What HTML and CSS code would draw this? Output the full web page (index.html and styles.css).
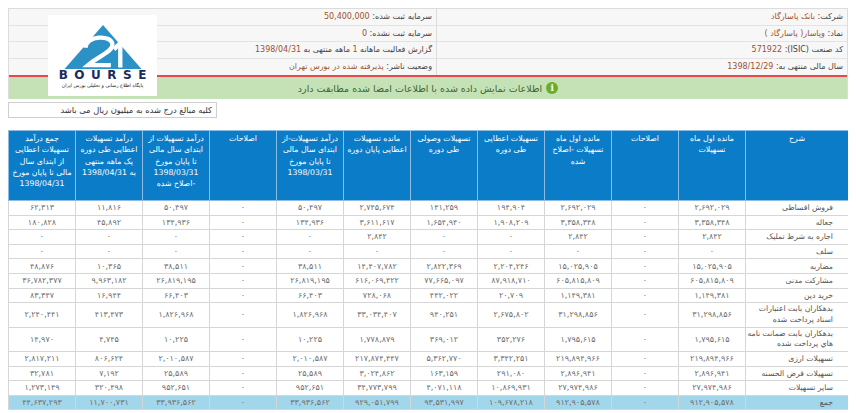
FILE: index.html
```html
<!DOCTYPE html>
<html lang="fa">
<head>
<meta charset="utf-8">
<title>گزارش فعالیت ماهانه - بانک پاسارگاد</title>
<link rel="stylesheet" href="styles.css">
</head>
<body>
<div class="report-head">
  <div class="info">
    <div class="info-col info-right">
      <div class="info-row">شرکت: <span class="val">بانک پاسارگاد</span></div>
      <div class="info-row">نماد: <span class="val">وپاسار( پاسارگاد )</span></div>
      <div class="info-row">کد صنعت (ISIC): <span class="val">571922</span></div>
      <div class="info-row">سال مالی منتهی به: <span class="val">1398/12/29</span></div>
    </div>
    <div class="info-col info-left">
      <div class="info-row">سرمایه ثبت شده: <span class="val">50,400,000</span></div>
      <div class="info-row">سرمایه ثبت نشده: <span class="val">0</span></div>
      <div class="info-row">گزارش فعالیت ماهانه <span class="val">1</span> ماهه منتهی به <span class="val">1398/04/31</span></div>
      <div class="info-row">وضعیت ناشر: <span class="val">پذیرفته شده در بورس تهران</span></div>
    </div>
  </div>
  <div class="verified">
    <span class="info-icon">i</span>
    <span>اطلاعات نمایش داده شده با اطلاعات امضا شده مطابقت دارد</span>
  </div>
  <div class="logo">
    <svg class="logo-mark" viewBox="0 0 100 56" width="84" height="44">
      <polygon points="50,0 1,56 99,56" fill="#2c92c6"/>
      <path d="M28,29 C28,13 62,12 62,25 C62,34 44,40 31,51 L60,51" fill="none" stroke="#fff" stroke-width="5.5"/>
      <path d="M64,31 L72,23 L72,54" fill="none" stroke="#fff" stroke-width="5.5"/>
    </svg>
    <div class="logo-word">BOURSE</div>
    <div class="logo-sub">پایگاه اطلاع رسانی و تحلیلی بورس ایران</div>
  </div>
</div>

<div class="note">کلیه مبالغ درج شده به میلیون ریال می باشد</div>

<table class="grid">
  <colgroup>
    <col class="c-label"><col><col><col><col><col><col><col><col><col><col><col>
  </colgroup>
  <thead>
    <tr>
      <th>شرح</th>
      <th>مانده اول ماه<br>تسهیلات</th>
      <th>اصلاحات</th>
      <th>مانده اول ماه<br>تسهیلات -اصلاح<br>شده</th>
      <th>تسهیلات اعطایی<br>طی دوره</th>
      <th>تسهیلات وصولی<br>طی دوره</th>
      <th>مانده تسهیلات<br>اعطایی پایان دوره</th>
      <th>درآمد تسهیلات-از<br>ابتدای سال مالی<br>تا پایان مورخ<br>1398/03/31</th>
      <th>اصلاحات</th>
      <th>درآمد تسهیلات از<br>ابتدای سال مالی<br>تا پایان مورخ<br>1398/03/31<br>-اصلاح شده</th>
      <th>درآمد تسهیلات<br>اعطایی طی دوره<br>یک ماهه منتهی<br>به 1398/04/31</th>
      <th>جمع درآمد<br>تسهیلات اعطایی<br>از ابتدای سال<br>مالی تا پایان مورخ<br>1398/04/31</th>
    </tr>
  </thead>
  <tbody>
    <tr><td class="lbl">فروش اقساطی</td><td>۲,۶۹۲,۰۲۹</td><td>۰</td><td>۲,۶۹۲,۰۲۹</td><td>۱۹۴,۹۰۴</td><td>۱۴۱,۲۵۹</td><td>۲,۷۴۵,۶۷۴</td><td>۵۰,۴۹۷</td><td>۰</td><td>۵۰,۴۹۷</td><td>۱۱,۸۱۶</td><td>۶۲,۳۱۳</td></tr>
    <tr><td class="lbl">جعاله</td><td>۳,۳۵۸,۳۴۸</td><td>۰</td><td>۳,۳۵۸,۳۴۸</td><td>۱,۹۰۸,۲۰۹</td><td>۱,۶۵۴,۹۴۰</td><td>۳,۶۱۱,۶۱۷</td><td>۱۳۴,۹۳۶</td><td>۰</td><td>۱۳۴,۹۳۶</td><td>۴۵,۸۹۲</td><td>۱۸۰,۸۲۸</td></tr>
    <tr><td class="lbl">اجاره به شرط تملیک</td><td>۲,۸۴۲</td><td>۰</td><td>۲,۸۴۲</td><td>۰</td><td>۰</td><td>۲,۸۴۲</td><td>۰</td><td>۰</td><td>۰</td><td>۰</td><td>۰</td></tr>
    <tr><td class="lbl">سلف</td><td>۰</td><td>۰</td><td>۰</td><td>۰</td><td>۰</td><td>۰</td><td>۰</td><td>۰</td><td>۰</td><td>۰</td><td>۰</td></tr>
    <tr><td class="lbl">مضاربه</td><td>۱۵,۰۲۵,۹۰۵</td><td>۰</td><td>۱۵,۰۲۵,۹۰۵</td><td>۲,۲۰۴,۲۴۶</td><td>۲,۸۲۲,۳۶۹</td><td>۱۴,۴۰۷,۷۸۲</td><td>۳۸,۵۱۱</td><td>۰</td><td>۳۸,۵۱۱</td><td>۱۰,۳۶۵</td><td>۴۸,۸۷۶</td></tr>
    <tr><td class="lbl">مشارکت مدنی</td><td>۶۰۵,۸۱۵,۸۰۹</td><td>۰</td><td>۶۰۵,۸۱۵,۸۰۹</td><td>۸۷,۹۱۸,۷۱۰</td><td>۷۷,۶۶۵,۰۹۷</td><td>۶۱۶,۰۶۹,۴۲۲</td><td>۲۶,۸۱۹,۱۹۵</td><td>۰</td><td>۲۶,۸۱۹,۱۹۵</td><td>۹,۹۶۳,۱۸۲</td><td>۳۶,۷۸۲,۳۷۷</td></tr>
    <tr><td class="lbl">خرید دین</td><td>۱,۱۴۹,۳۸۱</td><td>۰</td><td>۱,۱۴۹,۳۸۱</td><td>۲۰,۷۰۹</td><td>۴۴۲,۰۲۲</td><td>۷۲۸,۰۶۸</td><td>۶۶,۴۰۳</td><td>۰</td><td>۶۶,۴۰۳</td><td>۱۶,۹۴۴</td><td>۸۳,۳۴۷</td></tr>
    <tr class="tall"><td class="lbl">بدهکاران بابت اعتبارات<br>اسناد پرداخت شده</td><td>۳۱,۲۹۸,۸۵۶</td><td>۰</td><td>۳۱,۲۹۸,۸۵۶</td><td>۲,۶۷۵,۸۰۲</td><td>۹۴۰,۲۵۱</td><td>۳۳,۰۳۴,۴۰۷</td><td>۱,۸۲۶,۹۶۸</td><td>۰</td><td>۱,۸۲۶,۹۶۸</td><td>۴۱۳,۴۷۳</td><td>۲,۲۴۰,۴۴۱</td></tr>
    <tr class="tall"><td class="lbl">بدهکاران بابت ضمانت نامه<br>هاي پرداخت شده</td><td>۱,۷۹۵,۶۱۵</td><td>۰</td><td>۱,۷۹۵,۶۱۵</td><td>۳۵۲,۲۷۶</td><td>۳۶۹,۰۱۲</td><td>۱,۷۷۸,۸۷۹</td><td>۱۰,۲۲۵</td><td>۰</td><td>۱۰,۲۲۵</td><td>۴,۷۴۵</td><td>۱۴,۹۷۰</td></tr>
    <tr><td class="lbl">تسهیلات ارزی</td><td>۲۱۹,۸۹۴,۹۶۶</td><td>۰</td><td>۲۱۹,۸۹۴,۹۶۶</td><td>۳,۳۴۲,۲۵۱</td><td>۵,۳۶۲,۷۷۰</td><td>۲۱۷,۸۷۴,۴۴۷</td><td>۲,۰۱۰,۵۸۷</td><td>۰</td><td>۲,۰۱۰,۵۸۷</td><td>۸۰۶,۶۲۴</td><td>۲,۸۱۷,۲۱۱</td></tr>
    <tr><td class="lbl">تسهیلات قرض الحسنه</td><td>۲,۸۹۶,۹۴۱</td><td>۰</td><td>۲,۸۹۶,۹۴۱</td><td>۲۹۱,۰۸۰</td><td>۱۶۳,۱۵۹</td><td>۳,۰۲۴,۸۶۲</td><td>۲۵,۵۸۹</td><td>۰</td><td>۲۵,۵۸۹</td><td>۷,۱۹۲</td><td>۳۲,۷۸۱</td></tr>
    <tr><td class="lbl">سایر تسهیلات</td><td>۲۷,۹۷۴,۹۸۶</td><td>۰</td><td>۲۷,۹۷۴,۹۸۶</td><td>۱۰,۸۶۹,۹۳۱</td><td>۴,۰۷۱,۱۱۸</td><td>۳۴,۷۷۳,۷۹۹</td><td>۹۵۲,۶۵۱</td><td>۰</td><td>۹۵۲,۶۵۱</td><td>۳۲۰,۴۹۸</td><td>۱,۲۷۳,۱۴۹</td></tr>
    <tr class="total"><td class="lbl">جمع</td><td>۹۱۲,۹۰۵,۵۷۸</td><td>۰</td><td>۹۱۲,۹۰۵,۵۷۸</td><td>۱۰۹,۶۷۸,۲۱۸</td><td>۹۳,۵۳۱,۹۹۷</td><td>۹۲۹,۰۵۱,۷۹۹</td><td>۳۳,۹۳۶,۵۶۲</td><td>۰</td><td>۳۳,۹۳۶,۵۶۲</td><td>۱۱,۷۰۰,۷۳۱</td><td>۴۴,۶۳۷,۲۹۳</td></tr>
  </tbody>
</table>
</body>
</html>
```

FILE: styles.css
```css
* { box-sizing: border-box; }

body {
  margin: 8px;
  background: #fff;
  color: #333;
  font-family: "DejaVu Sans", sans-serif;
}

.report-head {
  position: relative;
  border: 1px solid #dcdcdc;
  border-bottom: 0;
}

.info {
  display: flex;
  direction: rtl;
}

.info-col {
  display: flex;
  flex-direction: column;
}

.info-right {
  width: 411px;
  border-left: 1px solid #dcdcdc;
}

.info-left {
  flex: 1;
}

.info-row {
  height: 16.5px;
  line-height: 16px;
  padding: 0 4px;
  background: #f7f7f7;
  border-bottom: 1px solid #e3e3e3;
  font-size: 8px;
  color: #444;
  white-space: nowrap;
}

.info-row:last-child {
  border-bottom: 0;
}

.val {
  color: #a0522d;
}

.verified {
  height: 24px;
  border-top: 2px solid #e8474b;
  background: #c4e2b6;
  display: flex;
  justify-content: center;
  align-items: center;
  gap: 4px;
  direction: rtl;
  color: #3e6630;
  font-size: 9.5px;
}

.info-icon {
  width: 12px;
  height: 12px;
  border-radius: 50%;
  background: #6cae23;
  color: #fff;
  font-size: 9px;
  font-weight: bold;
  line-height: 12px;
  text-align: center;
  font-family: "DejaVu Serif", serif;
}

.logo {
  position: absolute;
  left: 39px;
  top: 6px;
  width: 109px;
  height: 81px;
  background: #fff;
  display: flex;
  flex-direction: column;
  align-items: center;
  padding-top: 10px;
}

.logo-mark {
  display: block;
}

.logo-word {
  margin-top: 1px;
  font-family: "DejaVu Sans", sans-serif;
  font-size: 12px;
  font-weight: bold;
  letter-spacing: 6.5px;
  padding-left: 6.5px;
  line-height: 11px;
  color: #1c2b5d;
}

.logo-sub {
  margin-top: 2px;
  font-size: 4.8px;
  line-height: 6px;
  color: #222;
  direction: rtl;
  white-space: nowrap;
}

.note {
  width: 209px;
  height: 16px;
  margin-top: 3px;
  border: 1px solid #cfcfcf;
  direction: rtl;
  text-align: right;
  padding: 0 4px;
  font-size: 8.3px;
  line-height: 14px;
  color: #333;
  white-space: nowrap;
}

.grid {
  margin-top: 12px;
  width: 840px;
  border-collapse: collapse;
  table-layout: fixed;
  direction: rtl;
}

.grid col { width: 67px; }
.grid col.c-label { width: 103px; }

.grid th {
  height: 70px;
  background: #0b7cc8;
  color: #fff;
  font-weight: normal;
  font-size: 7.8px;
  line-height: 11.3px;
  vertical-align: top;
  text-align: center;
  padding: 2px 1px;
  border: 1px solid #8dbde3;
}

.grid td {
  height: 14.6px;
  padding: 0 2px;
  border: 1px solid #d6d6d6;
  font-size: 8px;
  line-height: 11px;
  color: #6e6e6e;
  text-align: center;
  white-space: nowrap;
}

.grid tr.tall td {
  height: 24.4px;
}

.grid tr.tall td.lbl {
  line-height: 10.5px;
}

.grid td.lbl {
  text-align: right;
  padding-right: 15px;
  color: #555;
  font-size: 7.7px;
}

.grid tr.total td {
  background: #a2d6ea;
}
```
